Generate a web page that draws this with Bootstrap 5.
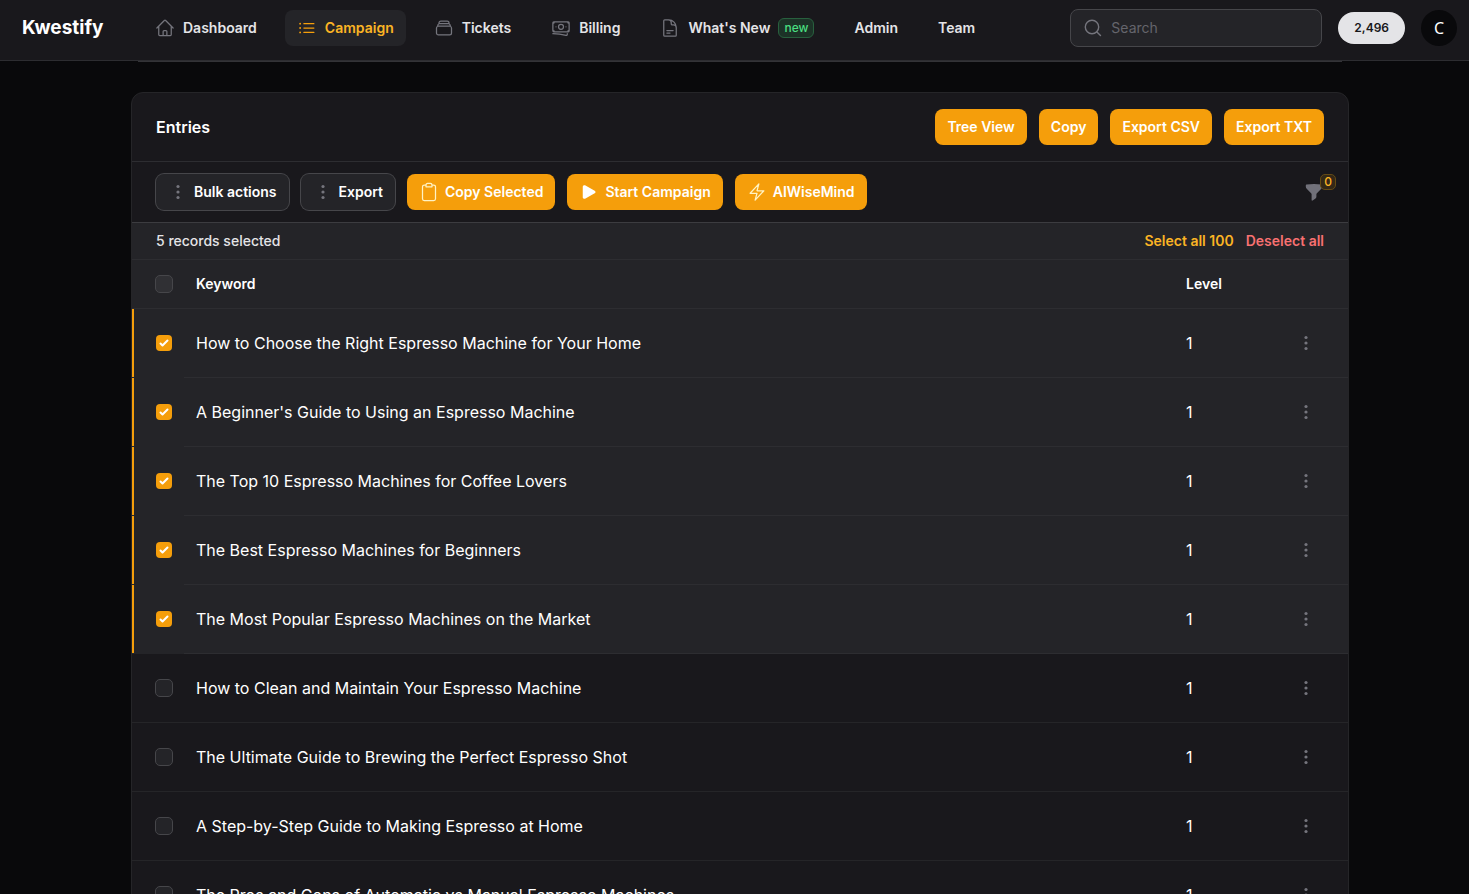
<!DOCTYPE html>
<html lang="en" data-bs-theme="dark">
<head>
<meta charset="utf-8">
<meta name="viewport" content="width=device-width, initial-scale=1">
<title>Kwestify - Campaign entries</title>
<link href="https://cdn.jsdelivr.net/npm/bootstrap@5.3.0/dist/css/bootstrap.min.css" rel="stylesheet">
<style>
:root{--line:#2d2d31;--ring:#46464a;--panel:#19181c;--raised:#242428;--amber:#f59e0b;--amber-text:#fbb424;--muted:#75757d}
body{font-family:Inter,"Open Sans",sans-serif;font-size:14px;line-height:20px;color:#fff;background:#09090b}
svg{display:block;flex:none}
.topbar{background:var(--panel);border-bottom:1px solid var(--line);padding:0 12px 0 22px;height:61px}
.topbar .navbar-brand{font-size:19px;line-height:28px;font-weight:700;color:#fff;margin:0;padding:0 0 4px;width:121px}
.main-nav{gap:16px;padding-bottom:4px}
.main-nav .nav-link{display:flex;align-items:center;gap:8px;height:36px;padding:0 12px;border-radius:8px;font-weight:600;color:#e4e4e7;white-space:nowrap}
.main-nav .nav-link svg{color:var(--muted)}
.main-nav .nav-link.active{background:var(--raised);color:var(--amber-text)}
.main-nav .nav-link.active svg{color:var(--amber)}
.tag-new{font-size:12px;line-height:18px;font-weight:500;color:#4ade80;background:#1c3227;border:1px solid #28603e;border-radius:6px;padding:0 5px}
.top-tools{gap:16px;padding-bottom:4px}
.search-box{width:252px;height:38px;background:var(--raised);border:1px solid var(--ring);border-radius:8px;padding:0 12px;gap:8px;color:var(--muted)}
.search-box input{background:none;border:0;outline:0;color:#fff;padding:0;min-width:0;width:100%}
.search-box input::placeholder{color:#65656c;opacity:1}
.credits{height:32px;padding:0 16px;background:#e4e4e7;color:#18181b;font-size:12px;font-weight:600}
.avatar{width:36px;height:36px;background:#09090b;color:#fff;font-family:"Noto Sans",sans-serif;font-size:16px;border:0}
.page-scroll{overflow:auto;scrollbar-width:none;padding-left:11px}
.page-scroll::-webkit-scrollbar{display:none}
.page-wrap{max-width:1218px}
.panel-above{height:1px;margin:0 7px 30px;background:#333337}
.entries{background:var(--panel);border:1px solid #252528;border-radius:12px}
.entries-head{padding:16px 24px;border-bottom:1px solid var(--line)}
.entries-head h2{font-size:16px;line-height:24px;font-weight:600}
.act{display:inline-flex;align-items:center;gap:6px;height:36px;padding:0 12px;border-radius:8px;font-size:14px;line-height:20px;font-weight:600;border:0;background:var(--amber);color:#fff;white-space:nowrap}
.act:hover{background:#fbbf24;color:#fff}
.act svg{color:#fff3c4}
.act-dark{background:var(--raised);box-shadow:0 0 0 1px var(--ring)}
.act-dark svg{color:var(--muted)}
.act-gap{gap:12px}
.tools-row{padding:12px 24px;border-bottom:1px solid #3c3c40}
.filter-btn{background:none;border:0;color:#71717a;padding:0}
.filter-count{position:absolute;left:16px;top:-8px;width:16px;height:16px;font-size:12px;line-height:14px;font-weight:500;color:var(--amber-text);background:#332817;border:1px solid #634a15;border-radius:5px}
.select-row{padding:8px 24px;background:var(--raised);border-bottom:1px solid var(--line);color:#e4e4e7;font-weight:500}
.select-row a{font-weight:600;text-decoration:none;color:var(--amber-text)}
.select-row a.drop{color:#f87171}
.entry-table{table-layout:fixed;width:100%;border-collapse:separate;border-spacing:0}
.entry-table th,.entry-table td{padding:0 12px;height:69px;border-bottom:1px solid #252528;vertical-align:middle}
.entry-table th{height:49px;background:var(--raised);font-weight:600;border-color:var(--line)}
.entry-table td{font-size:16px;line-height:24px}
.entry-table .c-check{width:52px;padding:0 0 0 23px}
.entry-table .c-level{width:90px}
.entry-table .c-more{width:84px;padding:0 24px}
.entry-table .picked td{background:var(--raised);border-color:var(--line)}
.entry-table .picked .c-check{border-bottom-color:var(--raised);background:linear-gradient(var(--amber),var(--amber)) 0 0/2px 100% no-repeat padding-box,var(--raised)}
.tick{appearance:none;display:block;width:18px;height:18px;margin:0;border:1px solid #46464a;border-radius:5px;background:#242428}
th .tick{background:#303034}
.tick:checked{width:16px;height:16px;margin-left:1px;border:0;border-radius:4px;background:var(--amber) url("data:image/svg+xml,%3Csvg viewBox='0 0 16 16' fill='white' xmlns='http://www.w3.org/2000/svg'%3E%3Cpath d='M12.207 4.793a1 1 0 010 1.414l-5 5a1 1 0 01-1.414 0l-2-2a1 1 0 011.414-1.414L6.5 9.086l4.293-4.293a1 1 0 011.414 0z'/%3E%3C/svg%3E")}
.more{width:36px;height:36px;border:0;background:none;color:#75757d;padding:8px}
</style>
</head>
<body class="vh-100 d-flex flex-column overflow-hidden">
<svg width="0" height="0" class="position-absolute" aria-hidden="true">
  <symbol id="i-dots" viewBox="0 0 20 20"><g fill="currentColor"><circle cx="10" cy="4.500" r="1.600"/><circle cx="10" cy="10" r="1.600"/><circle cx="10" cy="15.500" r="1.600"/></g></symbol>
</svg>
<header class="topbar d-flex align-items-center flex-shrink-0">
  <a class="navbar-brand" href="#">Kwestify</a>
  <nav aria-label="Main">
    <ul class="nav main-nav flex-nowrap">
      <li><a class="nav-link" href="#"><svg width="20" height="20" viewBox="0 0 24 24" fill="none" stroke="currentColor" stroke-width="1.5" stroke-linecap="round" stroke-linejoin="round"><path d="M2.25 12l8.954-8.955c.44-.439 1.152-.439 1.591 0L21.75 12M4.5 9.75v10.125c0 .621.504 1.125 1.125 1.125H9.75v-4.875c0-.621.504-1.125 1.125-1.125h2.25c.621 0 1.125.504 1.125 1.125V21h4.125c.621 0 1.125-.504 1.125-1.125V9.75M8.25 21h8.25"/></svg>Dashboard</a></li>
      <li><a class="nav-link active" aria-current="page" href="#"><svg width="20" height="20" viewBox="0 0 24 24" fill="none" stroke="currentColor" stroke-width="1.5" stroke-linecap="round" stroke-linejoin="round"><path d="M8.25 6.75h12M8.25 12h12m-12 5.25h12M3.75 6.75h.007v.008H3.75V6.75zm.375 0a.375.375 0 11-.75 0 .375.375 0 01.75 0zM3.75 12h.007v.008H3.75V12zm.375 0a.375.375 0 11-.75 0 .375.375 0 01.75 0zm-.375 5.25h.007v.008H3.75v-.008zm.375 0a.375.375 0 11-.75 0 .375.375 0 01.75 0z"/></svg>Campaign</a></li>
      <li><a class="nav-link" href="#"><svg width="20" height="20" viewBox="0 0 24 24" fill="none" stroke="currentColor" stroke-width="1.5" stroke-linecap="round" stroke-linejoin="round"><path d="M6 6.878V6a2.25 2.25 0 012.25-2.25h7.5A2.25 2.25 0 0118 6v.878m-12 0c.235-.083.487-.128.75-.128h10.5c.263 0 .515.045.75.128m-12 0A2.25 2.25 0 004.5 9v.878m13.5-3A2.25 2.25 0 0119.5 9v.878m0 0a2.246 2.246 0 00-.75-.128H5.25c-.263 0-.515.045-.75.128m15 0A2.25 2.25 0 0121 12v6a2.25 2.25 0 01-2.25 2.25H5.25A2.25 2.25 0 013 18v-6c0-.98.626-1.813 1.5-2.122"/></svg>Tickets</a></li>
      <li><a class="nav-link" href="#"><svg width="20" height="20" viewBox="0 0 24 24" fill="none" stroke="currentColor" stroke-width="1.5" stroke-linecap="round" stroke-linejoin="round"><path d="M2.25 18.75a60.07 60.07 0 0115.797 2.101c.727.198 1.453-.342 1.453-1.096V18.75M3.75 4.5v.75A.75.75 0 013 6h-.75m0 0v-.375c0-.621.504-1.125 1.125-1.125H20.25M2.25 6v9m18-10.5v.75c0 .414.336.75.75.75h.75m-1.5-1.5h.375c.621 0 1.125.504 1.125 1.125v9.75c0 .621-.504 1.125-1.125 1.125h-.375m1.5-1.5H21a.75.75 0 00-.75.75v.75m0 0H3.75m0 0h-.375a1.125 1.125 0 01-1.125-1.125V15m1.5 1.5v-.75A.75.75 0 003 15h-.75M15 10.5a3 3 0 11-6 0 3 3 0 016 0zm3 0h.008v.008H18V10.5zm-12 0h.008v.008H6V10.5z"/></svg>Billing</a></li>
      <li><a class="nav-link" href="#"><svg width="20" height="20" viewBox="0 0 24 24" fill="none" stroke="currentColor" stroke-width="1.5" stroke-linecap="round" stroke-linejoin="round"><path d="M19.5 14.25v-2.625a3.375 3.375 0 00-3.375-3.375h-1.5A1.125 1.125 0 0113.5 7.125v-1.5a3.375 3.375 0 00-3.375-3.375H8.25m0 12.75h7.5m-7.5 3H12M10.5 2.25H5.625c-.621 0-1.125.504-1.125 1.125v17.25c0 .621.504 1.125 1.125 1.125h12.75c.621 0 1.125-.504 1.125-1.125V11.25a9 9 0 00-9-9z"/></svg>What's New<span class="tag-new">new</span></a></li>
      <li><a class="nav-link" href="#">Admin</a></li>
      <li><a class="nav-link" href="#">Team</a></li>
    </ul>
  </nav>
  <div class="top-tools d-flex align-items-center ms-auto">
    <label class="search-box d-flex align-items-center"><svg width="20" height="20" viewBox="0 0 20 20" fill="none" stroke="currentColor" stroke-width="1.4" stroke-linecap="round"><circle cx="9" cy="9" r="6.700"/><path d="M13.900 13.900l3.600 3.600"/></svg><input type="search" placeholder="Search" aria-label="Search"></label>
    <span class="credits rounded-pill d-flex align-items-center">2,496</span>
    <button class="avatar rounded-circle p-0" type="button" aria-label="Account menu">C</button>
  </div>
</header>

<main class="page-scroll flex-grow-1">
  <div class="page-wrap mx-auto">
    <div class="panel-above"></div>
    <section class="entries overflow-hidden">
      <div class="entries-head d-flex align-items-center justify-content-between">
        <h2 class="m-0">Entries</h2>
        <div class="d-flex act-gap">
          <button class="act" type="button">Tree View</button>
          <button class="act" type="button">Copy</button>
          <button class="act" type="button">Export CSV</button>
          <button class="act" type="button">Export TXT</button>
        </div>
      </div>
      <div class="tools-row d-flex align-items-center justify-content-between">
        <div class="d-flex act-gap">
          <button class="act act-dark" type="button"><svg width="20" height="20"><use href="#i-dots"/></svg>Bulk actions</button>
          <button class="act act-dark" type="button"><svg width="20" height="20"><use href="#i-dots"/></svg>Export</button>
          <button class="act" type="button"><svg width="20" height="20" viewBox="0 0 20 20" fill="none" stroke="currentColor" stroke-width="1.25" stroke-linejoin="round"><rect x="3.5" y="3" width="13" height="15.5" rx="1.8"/><path d="M7 4.8V3.2C7 2.2 7.600 1.400 8.600 1.400h2.800C12.400 1.400 13 2.200 13 3.200v1.600z" fill="#f59e0b"/></svg>Copy Selected</button>
          <button class="act" type="button"><svg width="20" height="20" viewBox="0 0 24 24" fill="#fff"><path d="M4.500 5.653c0-1.426 1.529-2.330 2.779-1.643l11.540 6.348c1.295.712 1.295 2.573 0 3.285L7.280 19.991c-1.250.687-2.779-.217-2.779-1.643V5.653z"/></svg>Start Campaign</button>
          <button class="act" type="button"><svg width="20" height="20" viewBox="0 0 24 24" fill="none" stroke="currentColor" stroke-width="1.5" stroke-linecap="round" stroke-linejoin="round"><path d="M3.750 13.500l10.500-11.250L12 10.500h8.250L9.750 21.750 12 13.500H3.750z"/></svg>AIWiseMind</button>
        </div>
        <button class="filter-btn position-relative" type="button" aria-label="Filter"><svg width="20" height="20" viewBox="0 0 20 20" fill="currentColor"><path d="M2.500 2.600C4.900 2.200 7.400 2 10 2s5.100.2 7.500.6c.4.1.7.4.7.8v1.200c0 .8-.3 1.600-.9 2.200l-4.400 4.400c-.3.300-.5.700-.5 1.100v2.300c0 .9-.4 1.700-1.200 2.100l-2.600 1.900c-.5.300-1 0-1-.6V12.300c0-.4-.2-.8-.5-1.100L2.700 6.800c-.6-.6-.9-1.400-.9-2.200V3.400c0-.4.3-.7.7-.8z"/></svg><span class="filter-count">0</span></button>
      </div>
      <div class="select-row d-flex justify-content-between">
        <span>5 records selected</span>
        <div class="d-flex act-gap"><a href="#">Select all 100</a><a href="#" class="drop">Deselect all</a></div>
      </div>
      <table class="entry-table">
        <thead><tr><th class="c-check"><input class="tick" type="checkbox" aria-label="Select all rows"></th><th>Keyword</th><th class="c-level">Level</th><th class="c-more"></th></tr></thead>
        <tbody>
          <tr class="picked"><td class="c-check"><input class="tick" type="checkbox" checked aria-label="Select row 1"></td><td>How to Choose the Right Espresso Machine for Your Home</td><td>1</td><td class="c-more"><button class="more d-block" type="button" aria-label="Row actions"><svg width="20" height="20"><use href="#i-dots"/></svg></button></td></tr>
          <tr class="picked"><td class="c-check"><input class="tick" type="checkbox" checked aria-label="Select row 2"></td><td>A Beginner's Guide to Using an Espresso Machine</td><td>1</td><td class="c-more"><button class="more d-block" type="button" aria-label="Row actions"><svg width="20" height="20"><use href="#i-dots"/></svg></button></td></tr>
          <tr class="picked"><td class="c-check"><input class="tick" type="checkbox" checked aria-label="Select row 3"></td><td>The Top 10 Espresso Machines for Coffee Lovers</td><td>1</td><td class="c-more"><button class="more d-block" type="button" aria-label="Row actions"><svg width="20" height="20"><use href="#i-dots"/></svg></button></td></tr>
          <tr class="picked"><td class="c-check"><input class="tick" type="checkbox" checked aria-label="Select row 4"></td><td>The Best Espresso Machines for Beginners</td><td>1</td><td class="c-more"><button class="more d-block" type="button" aria-label="Row actions"><svg width="20" height="20"><use href="#i-dots"/></svg></button></td></tr>
          <tr class="picked"><td class="c-check"><input class="tick" type="checkbox" checked aria-label="Select row 5"></td><td>The Most Popular Espresso Machines on the Market</td><td>1</td><td class="c-more"><button class="more d-block" type="button" aria-label="Row actions"><svg width="20" height="20"><use href="#i-dots"/></svg></button></td></tr>
          <tr><td class="c-check"><input class="tick" type="checkbox" aria-label="Select row 6"></td><td>How to Clean and Maintain Your Espresso Machine</td><td>1</td><td class="c-more"><button class="more d-block" type="button" aria-label="Row actions"><svg width="20" height="20"><use href="#i-dots"/></svg></button></td></tr>
          <tr><td class="c-check"><input class="tick" type="checkbox" aria-label="Select row 7"></td><td>The Ultimate Guide to Brewing the Perfect Espresso Shot</td><td>1</td><td class="c-more"><button class="more d-block" type="button" aria-label="Row actions"><svg width="20" height="20"><use href="#i-dots"/></svg></button></td></tr>
          <tr><td class="c-check"><input class="tick" type="checkbox" aria-label="Select row 8"></td><td>A Step-by-Step Guide to Making Espresso at Home</td><td>1</td><td class="c-more"><button class="more d-block" type="button" aria-label="Row actions"><svg width="20" height="20"><use href="#i-dots"/></svg></button></td></tr>
          <tr><td class="c-check"><input class="tick" type="checkbox" aria-label="Select row 9"></td><td>The Pros and Cons of Automatic vs Manual Espresso Machines</td><td>1</td><td class="c-more"><button class="more d-block" type="button" aria-label="Row actions"><svg width="20" height="20"><use href="#i-dots"/></svg></button></td></tr>
        </tbody>
      </table>
    </section>
  </div>
</main>
<script src="https://cdn.jsdelivr.net/npm/bootstrap@5.3.0/dist/js/bootstrap.bundle.min.js"></script>
</body>
</html>
